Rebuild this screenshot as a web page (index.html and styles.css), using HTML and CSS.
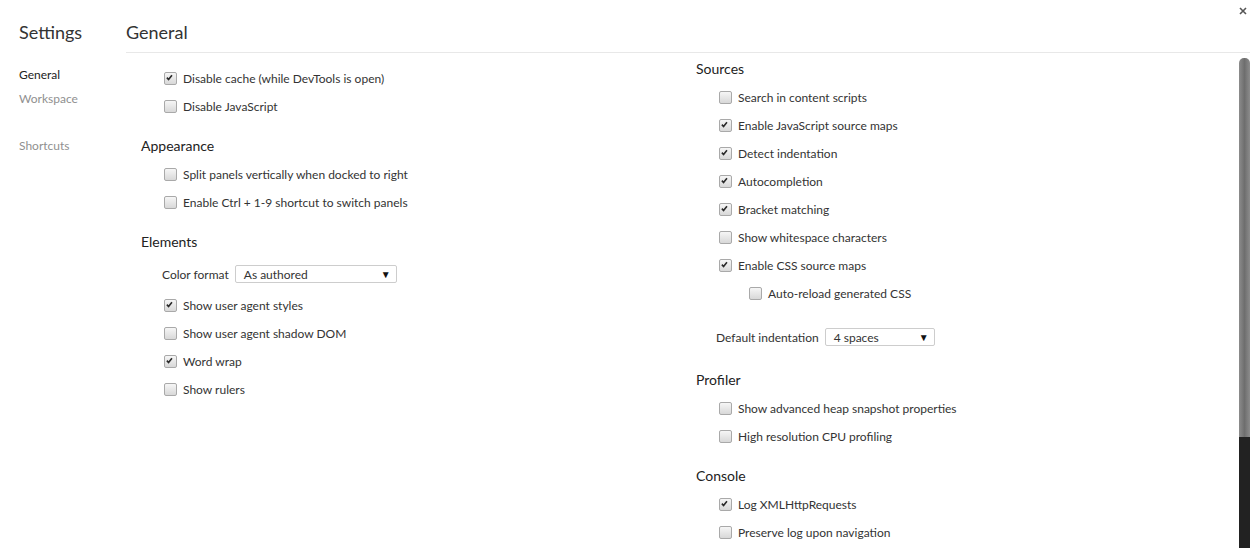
FILE: index.html
```html
<!DOCTYPE html>
<html>
<head>
<meta charset="utf-8">
<title>Settings</title>
<link rel="stylesheet" href="styles.css">
</head>
<body>
<div class="app">
  <aside class="sidebar">
    <div class="brand">Settings</div>
    <nav class="nav">
      <div class="nav-item selected">General</div>
      <div class="nav-item">Workspace</div>
      <div class="nav-item gap">Shortcuts</div>
    </nav>
  </aside>
  <main class="main">
    <header class="header">General</header>
    <div class="body">
      <div class="columns">
        <div class="column left">
          <section class="section">
            <div class="row"><span class="cb checked"><svg viewBox="0 0 13 13"><path d="M3.4 6.6 L5.4 8.8 L9.4 3.8"/></svg></span>Disable cache (while DevTools is open)</div>
            <div class="row"><span class="cb"></span>Disable JavaScript</div>
          </section>
          <section class="section">
            <div class="title">Appearance</div>
            <div class="row"><span class="cb"></span>Split panels vertically when docked to right</div>
            <div class="row"><span class="cb"></span>Enable Ctrl + 1-9 shortcut to switch panels</div>
          </section>
          <section class="section">
            <div class="title">Elements</div>
            <div class="select-row left-select">
              <span class="label">Color format</span>
              <span class="select wide"><span>As authored</span><span class="arrow">▼</span></span>
            </div>
            <div class="row"><span class="cb checked"><svg viewBox="0 0 13 13"><path d="M3.4 6.6 L5.4 8.8 L9.4 3.8"/></svg></span>Show user agent styles</div>
            <div class="row"><span class="cb"></span>Show user agent shadow DOM</div>
            <div class="row"><span class="cb checked"><svg viewBox="0 0 13 13"><path d="M3.4 6.6 L5.4 8.8 L9.4 3.8"/></svg></span>Word wrap</div>
            <div class="row"><span class="cb"></span>Show rulers</div>
          </section>
        </div>
        <div class="column right">
          <section class="section">
            <div class="title">Sources</div>
            <div class="row"><span class="cb"></span>Search in content scripts</div>
            <div class="row"><span class="cb checked"><svg viewBox="0 0 13 13"><path d="M3.4 6.6 L5.4 8.8 L9.4 3.8"/></svg></span>Enable JavaScript source maps</div>
            <div class="row"><span class="cb checked"><svg viewBox="0 0 13 13"><path d="M3.4 6.6 L5.4 8.8 L9.4 3.8"/></svg></span>Detect indentation</div>
            <div class="row"><span class="cb checked"><svg viewBox="0 0 13 13"><path d="M3.4 6.6 L5.4 8.8 L9.4 3.8"/></svg></span>Autocompletion</div>
            <div class="row"><span class="cb checked"><svg viewBox="0 0 13 13"><path d="M3.4 6.6 L5.4 8.8 L9.4 3.8"/></svg></span>Bracket matching</div>
            <div class="row"><span class="cb"></span>Show whitespace characters</div>
            <div class="row"><span class="cb checked"><svg viewBox="0 0 13 13"><path d="M3.4 6.6 L5.4 8.8 L9.4 3.8"/></svg></span>Enable CSS source maps</div>
            <div class="row nested"><span class="cb"></span>Auto-reload generated CSS</div>
            <div class="select-row right-select">
              <span class="label">Default indentation</span>
              <span class="select narrow"><span>4 spaces</span><span class="arrow">▼</span></span>
            </div>
          </section>
          <section class="section">
            <div class="title">Profiler</div>
            <div class="row"><span class="cb"></span>Show advanced heap snapshot properties</div>
            <div class="row"><span class="cb"></span>High resolution CPU profiling</div>
          </section>
          <section class="section">
            <div class="title">Console</div>
            <div class="row"><span class="cb checked"><svg viewBox="0 0 13 13"><path d="M3.4 6.6 L5.4 8.8 L9.4 3.8"/></svg></span>Log XMLHttpRequests</div>
            <div class="row"><span class="cb"></span>Preserve log upon navigation</div>
          </section>
        </div>
      </div>
      <div class="scrollbar"><div class="thumb"></div><div class="track"></div></div>
    </div>
  </main>
  <div class="close"><svg viewBox="0 0 8 8"><path d="M1 1 L7 7 M7 1 L1 7"/></svg></div>
</div>
</body>
</html>
```

FILE: styles.css
```css
html, body {
  margin: 0;
  padding: 0;
  background: #fff;
  height: 100%;
  overflow: hidden;
}
body {
  font-family: "Segoe UI", Lato, "Open Sans", sans-serif;
  font-size: 12px;
  color: #333;
}
.app {
  display: flex;
  height: 548px;
  position: relative;
}
.sidebar {
  width: 107px;
  padding-left: 19px;
  flex: none;
}
.brand, .header {
  font-size: 18px;
  line-height: 22px;
  padding-top: 21px;
  height: 31px;
  color: #333;
  font-weight: 400;
}
.nav {
  padding-top: 11px;
}
.nav-item {
  height: 24px;
  line-height: 24px;
  color: #909090;
}
.nav-item.selected {
  color: #222;
}
.nav-item.gap {
  margin-top: 23px;
}
.main {
  width: 1124px;
  flex: none;
  display: flex;
  flex-direction: column;
}
.header {
  border-bottom: 1px solid #e8e8e8;
}
.body {
  flex: 1;
  display: flex;
  min-height: 0;
}
.columns {
  flex: 1;
  display: flex;
  padding-left: 15px;
}
.column {
  display: flex;
  flex-direction: column;
}
.column.left {
  width: 555px;
  padding-top: 11px;
}
.column.right {
  flex: 1;
  padding-top: 2px;
}
.section {
  margin-bottom: 12px;
}
.title {
  height: 26px;
  padding-bottom: 2px;
  display: flex;
  align-items: center;
  font-size: 14px;
  color: #222;
}
.row {
  height: 28px;
  display: flex;
  align-items: center;
  padding-left: 23px;
}
.row.nested {
  padding-left: 53px;
}
.cb {
  width: 11px;
  height: 11px;
  border: 1px solid #a9a9a9;
  border-radius: 2px;
  background: linear-gradient(#f6f6f6, #d8d8d8);
  margin-right: 6px;
  flex: none;
  display: flex;
}
.cb svg {
  width: 11px;
  height: 11px;
  margin: -1px 0 0 -1px;
  overflow: visible;
}
.cb svg path {
  fill: none;
  stroke: #2a2a2a;
  stroke-width: 1.9;
  stroke-linecap: butt;
  stroke-linejoin: miter;
}
.select-row {
  height: 35px;
  display: flex;
  align-items: center;
  padding-top: 1px;
  box-sizing: border-box;
}
.left-select {
  padding-left: 21px;
}
.right-select {
  padding-left: 20px;
  margin-top: 12px;
}
.label {
  margin-right: 6px;
}
.select {
  height: 16px;
  border: 1px solid #cdcdcd;
  border-radius: 2px;
  background: #fff;
  display: flex;
  align-items: center;
  justify-content: space-between;
  padding: 0 5px 0 8px;
  box-sizing: content-box;
}
.select.wide {
  width: 147px;
}
.select.narrow {
  width: 95px;
}
.arrow {
  font-size: 10px;
  color: #111;
}
.scrollbar {
  width: 11px;
  flex: none;
  display: flex;
  flex-direction: column;
  padding-top: 5px;
}
.thumb {
  height: 379px;
  border-radius: 5px 5px 0 0;
  background: linear-gradient(90deg, #8c8c8c, #6e6e6e 50%, #8c8c8c);
}
.track {
  flex: 1;
  background: #222;
}
.close {
  position: absolute;
  left: 1239px;
  top: 7px;
  width: 8px;
  height: 8px;
}
.close svg {
  width: 8px;
  height: 8px;
  display: block;
}
.close svg path {
  stroke: #555;
  stroke-width: 1.6;
}
```
